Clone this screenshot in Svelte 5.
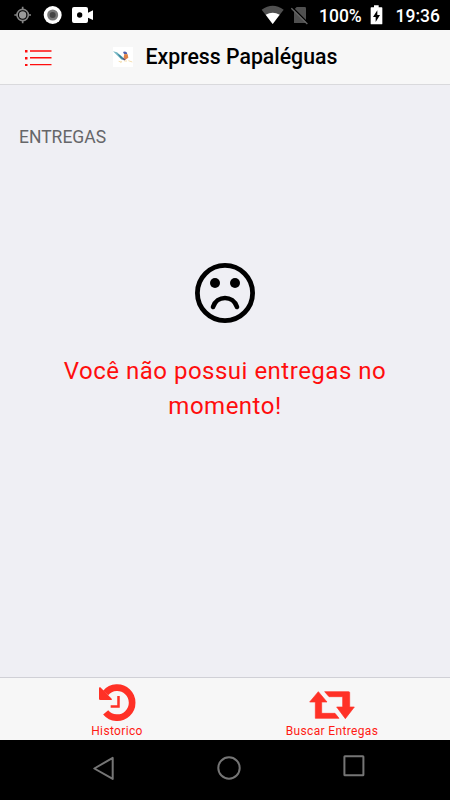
<script>
  let time = '19:36';
  let battery = '100%';
</script>

<div class="screen">
  <div class="status">
    <svg class="left" width="110" height="30" viewBox="0 0 330 90" aria-hidden="true">
      <g fill="none" stroke="#858585" stroke-width="5">
        <circle cx="68" cy="45" r="17" />
        <path d="M68 20v8M68 62v8M43 45h8M85 45h8" />
      </g>
      <circle cx="68" cy="45" r="11" fill="#9a9a9a" />
      <circle cx="158" cy="45" r="27" fill="#fff" />
      <circle cx="158" cy="45" r="16.5" fill="#777" />
      <circle cx="158" cy="45" r="9" fill="#444" />
      <path fill="#fff" d="M222 21h36q6 0 6 6v11l15-7v29l-15-7v10q0 6-6 6h-36q-6 0-6-6V27q0-6 6-6z" />
      <circle cx="239" cy="45" r="8" fill="#000" />
    </svg>
    <div class="right">
      <svg class="signals" width="52" height="30" viewBox="30 0 156 90" aria-hidden="true">
        <path fill="#505050" d="M35 29Q68 6 101 29L68 72z" />
        <path fill="#fff" d="M47 44Q68 32 89 44L68 72z" />
        <path fill="#505050" d="M140 21h24q4 0 4 4v44h-36V29z" />
        <path stroke="#000" stroke-width="4" d="M126 21l48 48" />
        <path stroke="#666" stroke-width="4" d="M124 25l48 47" />
      </svg>
      <span class="pct">{battery}</span>
      <svg class="batt" width="13" height="30" viewBox="361 0 39 90" aria-hidden="true">
        <path fill="#fff" d="M373 16h14v6h9q2 0 2 2v47q0 2-2 2h-31q-2 0-2-2V24q0-2 2-2h8z" />
        <path fill="#000" d="M383 31v14h8l-13 21V51h-8z" />
      </svg>
      <span class="time">{time}</span>
    </div>
  </div>

  <header>
    <svg class="menu" width="27" height="16" viewBox="0 0 27 16" aria-hidden="true">
      <path fill="#ff0d0d" d="M0 0h2.5v2.5H0zM0 7h2.5v2.5H0zM0 14h2.5v2H0zM5 .2h21.500v1.5H5zM5 7.1h21.500v1.3H5zM5 14h21.500v1.3H5z" />
    </svg>
    <svg class="logo" width="20" height="20" viewBox="0 0 60 60" aria-hidden="true">
      <path fill="#fff" d="M0 0h60v60H0z" />
      <path fill="#78b9c5" d="M0 13l12 3 12 10 10 8 0 6-8-2-14-13z" />
      <path fill="#347f99" d="M12 19l12 8 10 12-11-5z" />
      <path fill="#5360ad" d="M30 15q6-4 11 1l2 6-10-1z" />
      <path fill="#e08348" d="M34 21l10 1 2 10-9 6-5-7z" />
      <path fill="#70466e" d="M28 32l10 4-4 5z" />
      <path fill="none" stroke="#f5dfb0" stroke-width="3" d="M17 43l9 2M22 47l5-4M34 42l8 0M46 41l12 4" />
    </svg>
    <h1>Express Papaléguas</h1>
  </header>

  <main>
    <h2>ENTREGAS</h2>
    <div class="empty">
      <svg width="60" height="60" viewBox="0 0 60 60" aria-hidden="true">
        <circle cx="30" cy="30" r="27.6" fill="none" stroke="#000" stroke-width="4.8" />
        <circle cx="20" cy="20" r="5" />
        <circle cx="40" cy="20" r="5" />
        <path d="M18 44C22 32 38 32 42 44" fill="none" stroke="#000" stroke-width="4.6" stroke-linecap="round" />
      </svg>
      <p>Você não possui entregas no<br />momento!</p>
    </div>
  </main>

  <nav class="tabs">
    <div class="tab first">
      <svg width="38" height="38" viewBox="86 42 114 114" aria-hidden="true">
        <path d="M109 69A45 45 0 1 1 109 127" fill="none" stroke="#ff3126" stroke-width="20" />
        <path fill="#ff3126" d="M93 52q-4-2-4 3v31q0 4 4 4h32q5 0 2-4z" />
        <path fill="none" stroke="#ff3126" stroke-width="7.5" d="M147.500 78v31.500H124" />
      </svg>
      <span>Historico</span>
    </div>
    <div class="tab">
      <svg width="46" height="38" viewBox="119 42 138 114" aria-hidden="true">
        <path fill="#ff3126" stroke="#ff3126" stroke-width="2" stroke-linejoin="round" d="M147 65l26 31h-16v34h40l12 15h-71V96h-17zM166 65h72q3 0 3 3v43h14l-27 35-26-35h18V80h-41z" />
      </svg>
      <span>Buscar Entregas</span>
    </div>
  </nav>

  <div class="system">
    <svg class="back" width="22" height="25" viewBox="0 0 22 25" aria-hidden="true">
      <path d="M19.700 1.900v21L1.300 12.500z" />
    </svg>
    <svg class="home" width="24" height="24" viewBox="0 0 24 24" aria-hidden="true">
      <circle cx="12" cy="12" r="10.700" />
    </svg>
    <svg class="recent" width="22" height="22" viewBox="0 0 22 22" aria-hidden="true">
      <rect x="1.400" y="1.300" width="19" height="19" rx=".5" />
    </svg>
  </div>
</div>

<style>
  :global(body) { margin: 0; }
  .screen {
    width: 450px;
    height: 800px;
    display: flex;
    flex-direction: column;
    overflow: hidden;
    background: #efeff4;
    font-family: Roboto, sans-serif;
  }
  svg { display: block; flex: none; }
  .status {
    height: 30px;
    flex: none;
    display: flex;
    justify-content: space-between;
    background: #000;
    color: #fff;
  }
  .right { display: flex; width: 190px; }
  .status span { font-size: 17.500px; line-height: 32px; font-weight: 500; white-space: nowrap; }
  .pct { margin-left: 7px; width: 44px; }
  .batt { margin-left: 7px; }
  .time { margin-left: 12.500px; }
  header {
    height: 55px;
    box-sizing: border-box;
    flex: none;
    display: flex;
    align-items: flex-start;
    padding-left: 24.500px;
    background: #f7f7f7;
    border-bottom: 1px solid #d9d9dc;
  }
  .menu { margin-top: 20px; }
  .logo { margin: 17px 0 0 61.500px; }
  h1 {
    margin: 0 0 0 12.500px;
    font-size: 21.250px;
    line-height: 54px;
    font-weight: 500;
    color: #000;
    white-space: nowrap;
  }
  main { flex: 1; }
  h2 {
    margin: 42px 0 0 19px;
    font-size: 17.500px;
    line-height: 20px;
    font-weight: 400;
    color: #666669;
  }
  .empty { margin-top: 116px; display: flex; flex-direction: column; align-items: center; }
  p {
    margin: 31px 0 0;
    text-align: center;
    font-size: 24px;
    line-height: 35px;
    letter-spacing: .5px;
    color: #ff0d0d;
    white-space: nowrap;
  }
  .tabs {
    height: 63px;
    box-sizing: border-box;
    flex: none;
    display: flex;
    background: #f7f7f7;
    border-top: 1px solid #d0d0d6;
  }
  .tab {
    width: 196px;
    display: flex;
    flex-direction: column;
    align-items: center;
    padding-top: 6px;
  }
  .first { width: 234px; }
  .tab span {
    margin-top: 1px;
    font-size: 12px;
    line-height: 16px;
    letter-spacing: .35px;
    color: #ff1a14;
    white-space: nowrap;
  }
  .system {
    height: 60px;
    flex: none;
    display: flex;
    align-items: flex-start;
    background: #000;
    fill: none;
    stroke: #757575;
    stroke-width: 2;
    stroke-linejoin: round;
  }
  .back { margin: 16px 0 0 93px; }
  .home { margin: 16px 0 0 102px; }
  .recent { margin: 15px 0 0 102px; }
</style>
